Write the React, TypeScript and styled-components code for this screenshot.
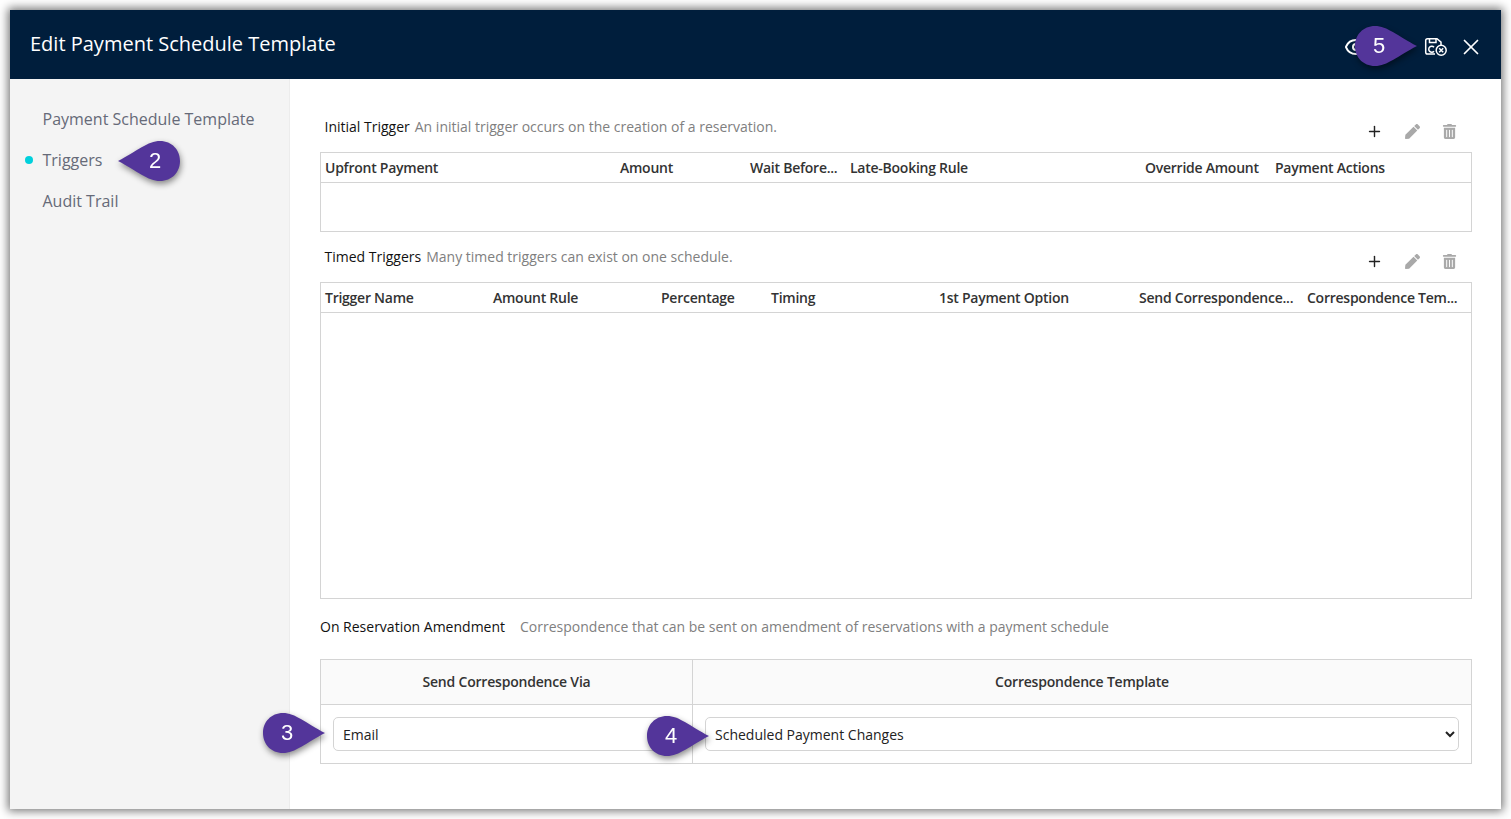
import React from 'react';
import styled, { createGlobalStyle } from 'styled-components';
import { Plus, X, Eye } from 'lucide-react';
import { FaPen, FaTrashAlt } from 'react-icons/fa';

const triggerColumns = [
  { label: 'Upfront Payment', width: 295 },
  { label: 'Amount', width: 130 },
  { label: 'Wait Before...', width: 100 },
  { label: 'Late-Booking Rule', width: 295 },
  { label: 'Override Amount', width: 130 },
  { label: 'Payment Actions', width: 200 },
];

const timedColumns = [
  { label: 'Trigger Name', width: 168 },
  { label: 'Amount Rule', width: 168 },
  { label: 'Percentage', width: 110 },
  { label: 'Timing', width: 168 },
  { label: '1st Payment Option', width: 200 },
  { label: 'Send Correspondence...', width: 168 },
  { label: 'Correspondence Tem...', width: 168 },
];

const Callout: React.FC<{ n: number; x: number; y: number; dir: 'left' | 'right' }> = ({ n, x, y, dir }) => (
  <Pin style={{ left: x, top: y }}>
    <svg width='64' height='42' viewBox='0 0 64 42'>
      <path
        d={
          dir === 'right'
            ? 'M21 1C33 1 44 11 63 21C44 31 33 41 21 41C9 41 1 32 1 21C1 10 9 1 21 1Z'
            : 'M43 1C31 1 20 11 1 21C20 31 31 41 43 41C55 41 63 32 63 21C63 10 55 1 43 1Z'
        }
        fill='#53359a'
      />
    </svg>
    <PinNumber $dir={dir}>{n}</PinNumber>
  </Pin>
);

const Toolbar: React.FC = () => (
  <Tools>
    <Plus size={17} color='#222' strokeWidth={2} />
    <FaPen size={15} color='#a9a9a9' />
    <FaTrashAlt size={15} color='#a9a9a9' />
  </Tools>
);

const SaveCancelIcon: React.FC = () => (
  <svg width='24' height='20' viewBox='0 0 24 20' fill='none' stroke='#fff' strokeWidth='1.5'>
    <path d='M11 17H3.5A1.8 1.8 0 0 1 1.7 15.2V3.5A1.8 1.8 0 0 1 3.5 1.7H13L17 5.2V8' />
    <path d='M5.5 2V5.5H12V2' />
    <path d='M10 10.2A3 3 0 1 0 10 14.2' />
    <circle cx='17.2' cy='13.2' r='5' />
    <path d='M15.2 11.2L19.2 15.2M19.2 11.2L15.2 15.2' />
  </svg>
);

const App: React.FC = () => (
  <>
    <GlobalStyle />
    <Modal>
      <Header>
        <Title>Edit Payment Schedule Template</Title>
        <HeaderIcons>
          <EyeIcon size={24} color='#fff' strokeWidth={2} />
          <SaveCancelIcon />
          <X size={26} color='#fff' strokeWidth={1.6} />
        </HeaderIcons>
      </Header>
      <Body>
        <Sidebar>
          <NavItem>Payment Schedule Template</NavItem>
          <NavItem $active>Triggers</NavItem>
          <NavItem>Audit Trail</NavItem>
        </Sidebar>
        <Content>
          <SectionHead>
            <Heading>
              <strong>Initial Trigger</strong>
              <span>An initial trigger occurs on the creation of a reservation.</span>
            </Heading>
            <Toolbar />
          </SectionHead>
          <Grid>
            <GridHeader>
              {triggerColumns.map((c) => (
                <Col key={c.label} style={{ width: c.width }}>
                  {c.label}
                </Col>
              ))}
            </GridHeader>
            <GridBody $height={48} />
          </Grid>

          <SectionHead $second>
            <Heading>
              <strong>Timed Triggers</strong>
              <span>Many timed triggers can exist on one schedule.</span>
            </Heading>
            <Toolbar />
          </SectionHead>
          <Grid>
            <GridHeader>
              {timedColumns.map((c) => (
                <Col key={c.label} style={{ width: c.width }}>
                  {c.label}
                </Col>
              ))}
            </GridHeader>
            <GridBody $height={285} />
          </Grid>

          <AmendHeading>
            <strong>On Reservation Amendment</strong>
            <span>Correspondence that can be sent on amendment of reservations with a payment schedule</span>
          </AmendHeading>
          <AmendTable>
            <AmendHead>Send Correspondence Via</AmendHead>
            <AmendHead>Correspondence Template</AmendHead>
            <AmendCell>
              <Select defaultValue='Email'>
                <option>Email</option>
              </Select>
            </AmendCell>
            <AmendCell>
              <Select defaultValue='Scheduled Payment Changes'>
                <option>Scheduled Payment Changes</option>
              </Select>
            </AmendCell>
          </AmendTable>
        </Content>
      </Body>
      <Callout n={5} x={1344} y={15} dir='right' />
      <Callout n={2} x={107} y={130} dir='left' />
      <Callout n={3} x={252} y={702} dir='right' />
      <Callout n={4} x={636} y={705} dir='right' />
    </Modal>
  </>
);

const GlobalStyle = createGlobalStyle`
  html, body {
    margin: 0;
    height: 100%;
    background: #fff;
    overflow: hidden;
  }
  body {
    font-family: 'Open Sans', sans-serif;
    font-size: 14px;
    color: #222;
  }
`;

const Modal = styled.div`
  position: relative;
  display: flex;
  flex-direction: column;
  width: 1491px;
  height: 799px;
  margin: 10px 0 0 10px;
  background: #fff;
  box-shadow: 0 0 9px 2px rgba(0, 0, 0, 0.55);
`;

const Header = styled.header`
  display: flex;
  align-items: center;
  justify-content: space-between;
  height: 69px;
  padding: 0 17px 0 20px;
  flex: none;
  background: #001e3c;
  color: #fff;
`;

const Title = styled.h1`
  margin: 0 0 2px;
  font-size: 20px;
  font-weight: 400;
`;

const HeaderIcons = styled.div`
  display: flex;
  align-items: center;
  gap: 10px;
  padding-top: 5px;
`;

const EyeIcon = styled(Eye)`
  margin-right: 46px;
`;

const Body = styled.div`
  display: flex;
  flex: 1;
  min-height: 0;
`;

const Sidebar = styled.nav`
  display: flex;
  flex-direction: column;
  gap: 19px;
  width: 280px;
  flex: none;
  padding: 29px 0 0 32.5px;
  box-sizing: border-box;
  background: #f4f4f4;
  border-right: 1px solid #ececec;
`;

const NavItem = styled.div<{ $active?: boolean }>`
  position: relative;
  font-size: 16px;
  line-height: 22px;
  color: #666a78;
  ${(p) =>
    p.$active &&
    `&::before {
      content: '';
      position: absolute;
      left: -17.5px;
      top: 7px;
      width: 8px;
      height: 8px;
      border-radius: 50%;
      background: #00d0dc;
    }`}
`;

const Content = styled.main`
  flex: 1;
  min-width: 0;
  padding: 0 29px 0 30px;
`;

const SectionHead = styled.div<{ $second?: boolean }>`
  display: flex;
  justify-content: space-between;
  height: ${(p) => (p.$second ? '50px' : '73px')};
  padding-top: ${(p) => (p.$second ? '15px' : '38px')};
  box-sizing: border-box;
`;

const Heading = styled.div`
  padding-left: 4.5px;
  line-height: 20px;
  strong {
    font-weight: 400;
    color: #111;
    margin-right: 5px;
  }
  span {
    color: #808080;
  }
`;

const Tools = styled.div`
  display: flex;
  align-items: center;
  gap: 22px;
  height: 20px;
  padding: 4px 15px 0 0;
`;

const Grid = styled.div`
  border: 1px solid #d4d4d4;
`;

const GridHeader = styled.div`
  display: flex;
  height: 29px;
  border-bottom: 1px solid #d4d4d4;
  align-items: center;
`;

const Col = styled.div`
  flex: none;
  box-sizing: border-box;
  padding-left: 4px;
  font-weight: 600;
  font-size: 14px;
  color: #333;
  letter-spacing: -0.25px;
  white-space: nowrap;
`;

const GridBody = styled.div<{ $height: number }>`
  height: ${(p) => p.$height}px;
`;

const AmendHeading = styled.div`
  display: flex;
  gap: 15px;
  padding-top: 18px;
  height: 60px;
  box-sizing: border-box;
  line-height: 20px;
  strong {
    font-weight: 400;
    color: #111;
  }
  span {
    color: #808080;
  }
`;

const AmendTable = styled.div`
  display: grid;
  grid-template-columns: 372px 1fr;
  grid-template-rows: 45px 59px;
  border: 1px solid #d4d4d4;
  border-width: 1px 0 0 1px;
`;

const AmendHead = styled.div`
  display: flex;
  align-items: center;
  justify-content: center;
  padding-bottom: 2px;
  background: #fafafa;
  font-weight: 600;
  color: #333;
  letter-spacing: -0.2px;
  border-right: 1px solid #d4d4d4;
  border-bottom: 1px solid #d4d4d4;
`;

const AmendCell = styled.div`
  display: flex;
  align-items: center;
  padding: 0 12px;
  border-right: 1px solid #d4d4d4;
  border-bottom: 1px solid #d4d4d4;
`;

const Select = styled.select`
  width: 100%;
  height: 34px;
  padding: 0 5px;
  font-family: inherit;
  font-size: 14px;
  color: #222;
  background: #fff;
  border: 1px solid #d4d4d4;
  border-radius: 5px;
`;

const Pin = styled.div`
  position: absolute;
  width: 64px;
  height: 42px;
  filter: drop-shadow(1px 3px 3px rgba(0, 0, 0, 0.45));
  svg {
    display: block;
  }
`;

const PinNumber = styled.span<{ $dir: 'left' | 'right' }>`
  position: absolute;
  top: 0;
  ${(p) => (p.$dir === 'right' ? 'left: 0; width: 50px;' : 'right: 0; width: 52px;')}
  line-height: 41px;
  text-align: center;
  font-family: 'Liberation Sans', sans-serif;
  font-size: 22px;
  color: #fff;
`;

export default App;
